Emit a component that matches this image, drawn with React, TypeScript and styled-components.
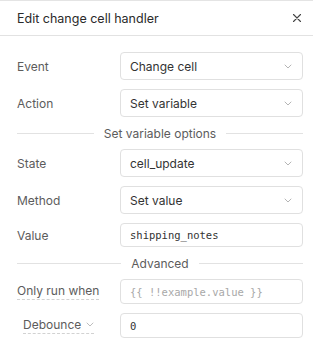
import { FC } from "react";
import styled, { createGlobalStyle } from "styled-components";

const GlobalStyle = createGlobalStyle`
  html, body {
    margin: 0;
    padding: 0;
    background: #ffffff;
    font-family: Inter, "Noto Sans", sans-serif;
  }
`;

const Panel = styled.div`
  width: 313px;
  height: 356px;
  box-sizing: border-box;
  background: #fff;
  border-top: 1px solid #e4e4e4;
  display: flex;
  flex-direction: column;
`;

const Header = styled.div`
  height: 34px;
  display: flex;
  align-items: center;
  justify-content: space-between;
  padding: 0 9px 0 17px;
  border-bottom: 1px solid #e2e2e2;

  .title {
    font-size: 12.5px;
    color: #2a2a2a;
  }
`;

const CloseButton = styled.button`
  border: none;
  background: none;
  padding: 0;
  width: 14px;
  height: 14px;
  display: flex;
  align-items: center;
  justify-content: center;
  color: #444;
`;

const Body = styled.div`
  display: flex;
  flex-direction: column;
  gap: 9px;
  padding: 16px 10px 0 17px;
`;

const Row = styled.div`
  display: grid;
  grid-template-columns: 103px 1fr;
  align-items: center;
`;

const Label = styled.span<{ $dotted?: boolean }>`
  font-size: 12px;
  color: #5c5c5c;
  justify-self: start;
  padding-bottom: ${(p) => (p.$dotted ? "1px" : "0")};
  border-bottom: ${(p) => (p.$dotted ? "1px dashed #d2d2d2" : "none")};
`;

const Field = styled.div<{ $height: number; $mono?: boolean; $muted?: boolean }>`
  height: ${(p) => p.$height}px;
  box-sizing: border-box;
  border: 1px solid #e0e0e0;
  border-radius: 4px;
  display: flex;
  align-items: center;
  justify-content: space-between;
  padding: 0 10px 0 9px;
  font-family: ${(p) => (p.$mono ? '"DejaVu Sans Mono", "Liberation Mono", monospace' : "Inter, sans-serif")};
  font-size: ${(p) => (p.$mono ? "10.5px" : "12px")};
  color: ${(p) => (p.$muted ? "#a8a8a8" : "#333")};
`;

const Divider = styled.div<{ $offset?: number }>`
  display: flex;
  align-items: center;
  gap: 10px;
  height: 14px;
  margin-top: ${(p) => p.$offset ?? 0}px;
  font-size: 12px;
  color: #5c5c5c;

  &::before,
  &::after {
    content: "";
    flex: 1;
    height: 1px;
    background: #e2e2e2;
  }
`;

const DebounceLabel = styled.span`
  display: inline-flex;
  align-items: center;
  gap: 5px;
  margin-left: 6px;
  justify-self: start;
  font-size: 12px;
  color: #5c5c5c;
  border-bottom: 1px dashed #d2d2d2;
  padding-bottom: 1px;
`;

const Chevron: FC<{ color?: string }> = ({ color = "#b5b5b5" }) => (
  <svg width="8" height="5" viewBox="0 0 8 5" fill="none">
    <path d="M1 1l3 3 3-3" stroke={color} strokeWidth="1" strokeLinecap="round" strokeLinejoin="round" />
  </svg>
);

const SelectRow: FC<{ label: string; value: string }> = ({ label, value }) => (
  <Row>
    <Label>{label}</Label>
    <Field $height={28}>
      <span>{value}</span>
      <Chevron />
    </Field>
  </Row>
);

const App: FC = () => {
  return (
    <Panel>
      <GlobalStyle />
      <Header>
        <span className="title">Edit change cell handler</span>
        <CloseButton>
          <svg width="10" height="10" viewBox="0 0 10 10">
            <path d="M1.5 1.5l7 7M8.5 1.5l-7 7" stroke="#444" strokeWidth="1.1" strokeLinecap="round" />
          </svg>
        </CloseButton>
      </Header>
      <Body>
        <SelectRow label="Event" value="Change cell" />
        <SelectRow label="Action" value="Set variable" />
        <Divider>Set variable options</Divider>
        <SelectRow label="State" value="cell_update" />
        <SelectRow label="Method" value="Set value" />
        <Row>
          <Label>Value</Label>
          <Field $height={24} $mono>
            shipping_notes
          </Field>
        </Row>
        <Divider>Advanced</Divider>
        <Row>
          <Label $dotted>Only run when</Label>
          <Field $height={25} $mono $muted>
            {"{{ !!example.value }}"}
          </Field>
        </Row>
        <Row>
          <DebounceLabel>
            Debounce
            <Chevron color="#bdbdbd" />
          </DebounceLabel>
          <Field $height={25} $mono>
            0
          </Field>
        </Row>
      </Body>
    </Panel>
  );
};

export default App;
